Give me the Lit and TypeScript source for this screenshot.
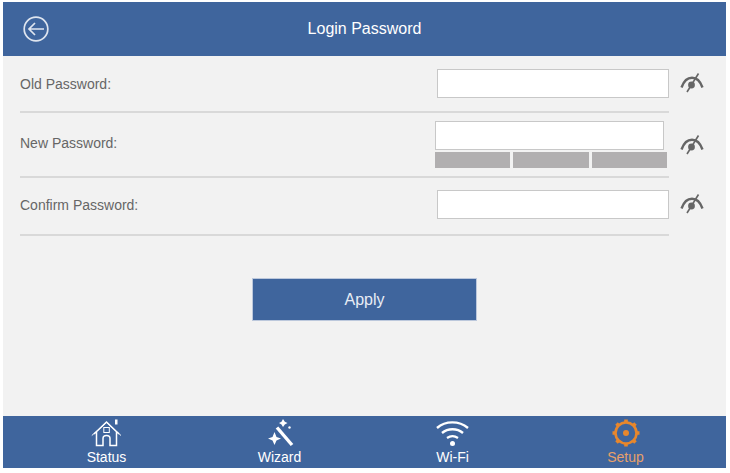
import { LitElement, html, css, svg } from "lit";
import { customElement } from "lit/decorators.js";

const eye = html`<svg class="eye" width="26" height="22" viewBox="0 0 26 22" fill="none">
  <path d="M2.5 15.5C5 8.5 9 5.8 13 5.8s8 2.700 10.500 9.700" stroke="#666" stroke-width="2.400" />
  <circle cx="12.500" cy="13" r="3.400" fill="#666" />
  <path d="M19.500 1.500L8 20" stroke="#666" stroke-width="1.600" />
</svg>`;

const home = svg`<path d="M3 16L15.500 4L28 16" stroke-width="1.600"/><path d="M5.500 14V27.500H12V20.500C12 18.500 13.500 17.500 15.500 17.500S19 18.500 19 20.500V27.500H25.500V14" stroke-width="1.500"/><path d="M0.800 17.500L15.500 4.500L30 17.500" stroke-width="1"/><rect x="12.800" y="9.500" width="5.500" height="5" stroke-width="1"/><rect x="24" y="1.500" width="2.500" height="5" fill="#fff" stroke="none"/>`;

const wand = svg`<path d="M12 9.500L27 27" stroke-width="3.400"/><path d="M9.500 14L11.500 19L16 20.500L11.500 22.500L9.500 27L7.500 22.500L3 20.500L7.500 19Z" fill="#fff" stroke="none"/><path d="M18 1L19.800 3.800L22.500 5L19.800 6.500L18 9L16.500 6.500L14 5L16.500 3.800Z" fill="#fff" stroke="none"/><circle cx="24.500" cy="9.500" r="1.200" fill="#fff" stroke="none"/>`;

const wifi = svg`<path d="M1 10C9.500 2.500 23 2.500 32 10" stroke-width="2.400"/><path d="M6 15C12 10 21 10 27 15" stroke-width="2.400"/><path d="M11 20C14.500 17.500 18.500 17.500 22 20" stroke-width="2.200"/><circle cx="16.500" cy="25.500" r="2.500" fill="#fff" stroke="none"/>`;

const gear = svg`<circle cx="15" cy="15" r="10.500" stroke-width="2.600"/><circle cx="15" cy="15" r="3" fill="#e8872c" stroke="none"/><path d="M15 1.500V5M15 25V28.500M1.500 15H5M25 15H28.500M5.500 5.500L8 8M22 22L24.500 24.500M24.500 5.500L22 8M8 22L5.500 24.500" stroke-width="3.600"/>`;

@customElement("app-root")
export class AppRoot extends LitElement {
  static styles = css`
    :host {
      display: block;
      width: 730px;
      height: 473px;
      box-sizing: border-box;
      padding: 2px 4px 5px 3px;
      background: #fff;
      font-family: "Liberation Sans", Arial, sans-serif;
      overflow: hidden;
    }
    .page {
      height: 466px;
      display: flex;
      flex-direction: column;
      background: #f2f2f2;
    }
    .head {
      height: 54px;
      flex: none;
      background: #3f659d;
      display: grid;
      grid-template-columns: 54px 1fr 54px;
      align-items: center;
      color: #fff;
      font-size: 16px;
      text-align: center;
    }
    .back {
      margin-left: 20px;
      display: block;
    }
    .body {
      flex: 1;
      padding: 14px 0 0 17px;
    }
    .row {
      display: flex;
      gap: 10px;
    }
    .main {
      width: 649px;
      box-sizing: border-box;
      border-bottom: 2px solid #d9d9d9;
      display: flex;
      justify-content: space-between;
      align-items: center;
      color: #666;
      font-size: 14px;
    }
    .r1 .main { height: 43px; padding-bottom: 14px; }
    .r1 .eye { margin-top: 2px; }
    .r2 { margin-top: 8px; }
    .r2 .main { height: 57px; align-items: flex-start; }
    .r2 .label { margin-top: 14px; }
    .r2 .eye { margin-top: 13px; }
    .r3 { margin-top: 13px; }
    .r3 .main { height: 45px; padding-bottom: 16px; }
    .r3 .eye { margin-top: 2px; }
    .input {
      width: 232px;
      height: 29px;
      box-sizing: border-box;
      background: #fff;
      border: 1px solid #c8c8c8;
    }
    .pw { width: 232px; margin-right: 2px; }
    .pw .input { width: 229px; }
    .bars {
      display: grid;
      grid-template-columns: 75px 76px 75px;
      gap: 3px;
      margin-top: 2px;
    }
    .bars i { display: block; height: 16px; background: #b1afb0; }
    .apply {
      display: block;
      width: 225px;
      height: 43px;
      margin: 42px 0 0 232px;
      padding: 0;
      border: 1px solid #bcc8dc;
      background: #3f659d;
      color: #e8edf5;
      font: 16px "Liberation Sans", Arial, sans-serif;
    }
    .foot {
      height: 52px;
      flex: none;
      overflow: hidden;
      background: #3f659d;
      display: grid;
      grid-template-columns: repeat(4, 173px);
      padding-left: 17px;
      color: #fff;
      font-size: 14px;
      text-align: center;
    }
    .tab svg { display: block; margin: 2px auto 0; fill: none; stroke: #fff; }
    .tab span { display: block; line-height: 16px; margin-top: 1px; }
    .tab.on { color: #e8a06a; }
    .tab.on svg { stroke: #e8872c; }
  `;

  render() {
    return html`<div class="page">
      <div class="head">
        <svg class="back" width="26" height="26" viewBox="0 0 26 26" fill="none" stroke="#dfe5ef" stroke-width="1.700">
          <circle cx="13" cy="13" r="11.800"/>
          <path d="M21 13H6M12 7L6 13L12 19" />
        </svg>
        <div>Login Password</div>
        <div></div>
      </div>
      <div class="body">
        <div class="row r1">
          <div class="main"><span>Old Password:</span><div class="input"></div></div>
          ${eye}
        </div>
        <div class="row r2">
          <div class="main">
            <span class="label">New Password:</span>
            <div class="pw">
              <div class="input"></div>
              <div class="bars"><i></i><i></i><i></i></div>
            </div>
          </div>
          ${eye}
        </div>
        <div class="row r3">
          <div class="main"><span>Confirm Password:</span><div class="input"></div></div>
          ${eye}
        </div>
        <button class="apply">Apply</button>
      </div>
      <div class="foot">
        <div class="tab"><svg width="31" height="30" viewBox="0 0 31 30">${home}</svg><span>Status</span></div>
        <div class="tab"><svg width="30" height="30" viewBox="0 0 30 30">${wand}</svg><span>Wizard</span></div>
        <div class="tab"><svg width="33" height="30" viewBox="0 0 33 30">${wifi}</svg><span>Wi-Fi</span></div>
        <div class="tab on"><svg width="30" height="30" viewBox="0 0 30 30">${gear}</svg><span>Setup</span></div>
      </div>
    </div>`;
  }
}
